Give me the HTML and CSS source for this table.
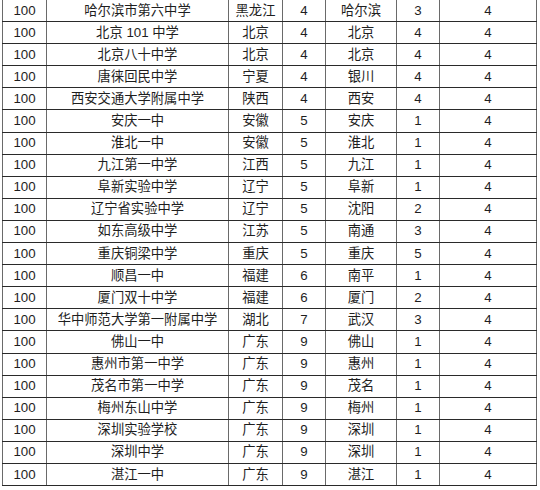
FILE: index.html
```html
<!DOCTYPE html>
<html lang="zh">
<head>
<meta charset="utf-8">
<link rel="stylesheet" href="styles.css">
</head>
<body>
<table class="grid">
<colgroup>
<col class="c1"><col class="c2"><col class="c3"><col class="c4"><col class="c5"><col class="c6"><col class="c7">
</colgroup>
<tbody>
<tr><td>100</td><td>哈尔滨市第六中学</td><td>黑龙江</td><td>4</td><td>哈尔滨</td><td>3</td><td>4</td></tr>
<tr><td>100</td><td>北京 101 中学</td><td>北京</td><td>4</td><td>北京</td><td>4</td><td>4</td></tr>
<tr><td>100</td><td>北京八十中学</td><td>北京</td><td>4</td><td>北京</td><td>4</td><td>4</td></tr>
<tr><td>100</td><td>唐徕回民中学</td><td>宁夏</td><td>4</td><td>银川</td><td>4</td><td>4</td></tr>
<tr><td>100</td><td>西安交通大学附属中学</td><td>陕西</td><td>4</td><td>西安</td><td>4</td><td>4</td></tr>
<tr><td>100</td><td>安庆一中</td><td>安徽</td><td>5</td><td>安庆</td><td>1</td><td>4</td></tr>
<tr><td>100</td><td>淮北一中</td><td>安徽</td><td>5</td><td>淮北</td><td>1</td><td>4</td></tr>
<tr><td>100</td><td>九江第一中学</td><td>江西</td><td>5</td><td>九江</td><td>1</td><td>4</td></tr>
<tr><td>100</td><td>阜新实验中学</td><td>辽宁</td><td>5</td><td>阜新</td><td>1</td><td>4</td></tr>
<tr><td>100</td><td>辽宁省实验中学</td><td>辽宁</td><td>5</td><td>沈阳</td><td>2</td><td>4</td></tr>
<tr><td>100</td><td>如东高级中学</td><td>江苏</td><td>5</td><td>南通</td><td>3</td><td>4</td></tr>
<tr><td>100</td><td>重庆铜梁中学</td><td>重庆</td><td>5</td><td>重庆</td><td>5</td><td>4</td></tr>
<tr><td>100</td><td>顺昌一中</td><td>福建</td><td>6</td><td>南平</td><td>1</td><td>4</td></tr>
<tr><td>100</td><td>厦门双十中学</td><td>福建</td><td>6</td><td>厦门</td><td>2</td><td>4</td></tr>
<tr><td>100</td><td>华中师范大学第一附属中学</td><td>湖北</td><td>7</td><td>武汉</td><td>3</td><td>4</td></tr>
<tr><td>100</td><td>佛山一中</td><td>广东</td><td>9</td><td>佛山</td><td>1</td><td>4</td></tr>
<tr><td>100</td><td>惠州市第一中学</td><td>广东</td><td>9</td><td>惠州</td><td>1</td><td>4</td></tr>
<tr><td>100</td><td>茂名市第一中学</td><td>广东</td><td>9</td><td>茂名</td><td>1</td><td>4</td></tr>
<tr><td>100</td><td>梅州东山中学</td><td>广东</td><td>9</td><td>梅州</td><td>1</td><td>4</td></tr>
<tr><td>100</td><td>深圳实验学校</td><td>广东</td><td>9</td><td>深圳</td><td>1</td><td>4</td></tr>
<tr><td>100</td><td>深圳中学</td><td>广东</td><td>9</td><td>深圳</td><td>1</td><td>4</td></tr>
<tr><td>100</td><td>湛江一中</td><td>广东</td><td>9</td><td>湛江</td><td>1</td><td>4</td></tr>
</tbody>
</table>
</body>
</html>
```
FILE: styles.css
```css
html, body {
  margin: 0;
  padding: 0;
  background: #ffffff;
}
body {
  font-family: "Liberation Sans", "Noto Sans CJK SC", sans-serif;
  font-size: 13.3px;
  color: #1e1e1e;
}
.grid {
  border-collapse: collapse;
  table-layout: fixed;
  width: 534px;
  margin: -1px 0 0 2px;
}
.c1 { width: 44px; }
.c2 { width: 182px; }
.c3 { width: 54px; }
.c4 { width: 43px; }
.c5 { width: 71px; }
.c6 { width: 43px; }
.c7 { width: 97px; }
.grid td {
  height: 22.1px;
  padding: 0;
  box-sizing: border-box;
  text-align: center;
  vertical-align: middle;
  line-height: 20px;
  white-space: nowrap;
  border-top: 1px solid #2a2a2a;
  border-bottom: 1px solid #2a2a2a;
  border-left: 1px solid #6a6a6a;
  border-right: 1px solid #6a6a6a;
}
```
